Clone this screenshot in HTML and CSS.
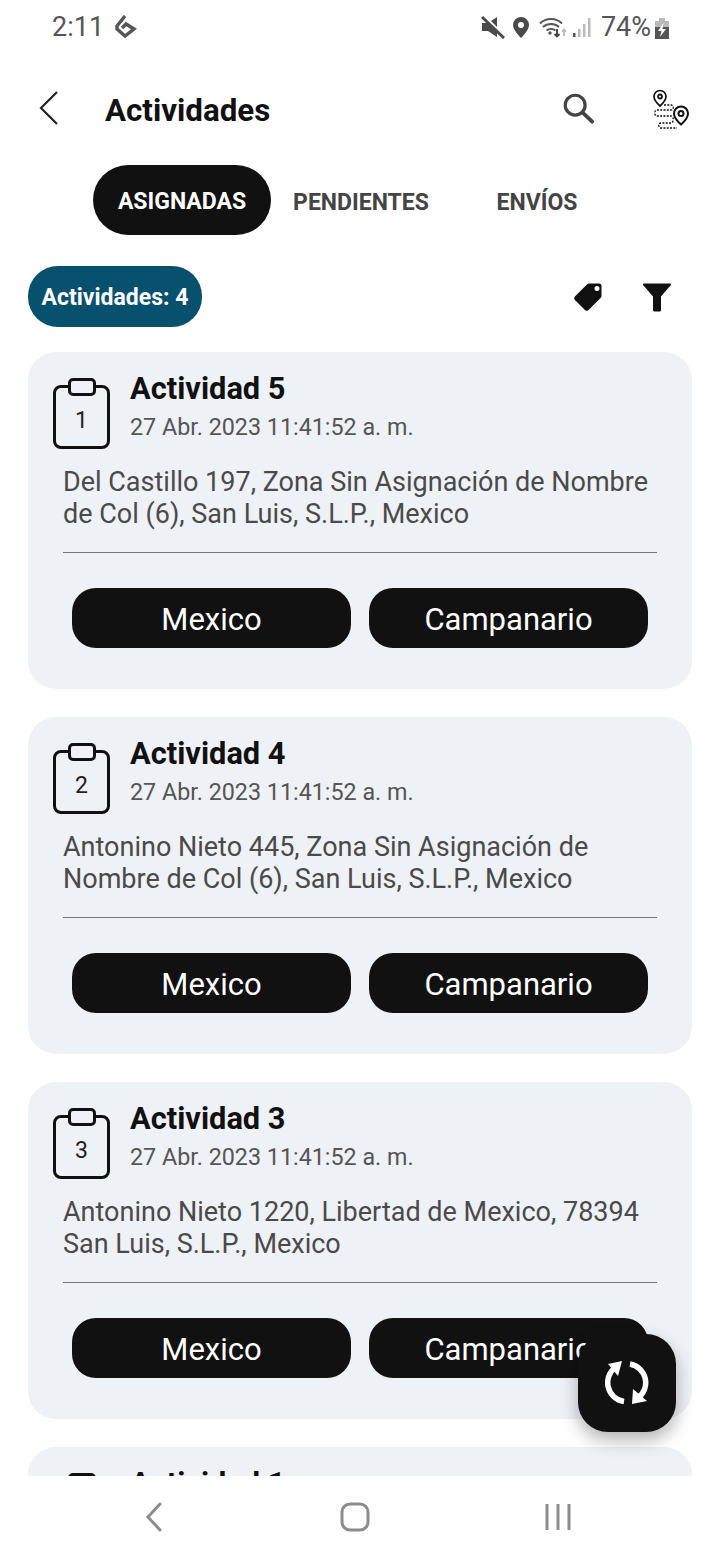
FILE: index.html
```html
<!DOCTYPE html>
<html lang="es">
<head>
    <meta charset="UTF-8">
    <title>Actividades</title>
    <link rel="stylesheet" href="styles.css">
</head>
<body>

<div class="app">
    <div class="status-bar">
        <div class="status-left">
            <span class="clock">2:11</span>
            <svg class="status-logo" width="24" height="24" viewBox="0 0 24 24" fill="none" stroke="#555" stroke-width="3.400">
                <path d="M12 1 L4 11 L4 14 L12 21 L21 14 L13 9 L9 13"/>
            </svg>
        </div>
        <div class="status-right">
            <svg width="24" height="24" viewBox="0 0 24 24"><path d="M1 8h6l9-6v20l-9-6H1z" fill="#4a4a4a"/><path d="M2 0 L24 22" stroke="#fff" stroke-width="3"/><path d="M1 2 L23 23" stroke="#4a4a4a" stroke-width="3"/></svg>
            <svg class="ico-pin" width="18" height="24" viewBox="0 0 18 24"><path fill-rule="evenodd" d="M9 2a8 8 0 0 0-8 8c0 5.500 8 13 8 13s8-7.500 8-13a8 8 0 0 0-8-8zm0 5a3 3 0 1 1 0 6 3 3 0 0 1 0-6z" fill="#4a4a4a"/></svg>
            <svg class="ico-wifi" width="28" height="24" viewBox="0 0 28 24" fill="none" stroke="#555" stroke-width="1.900">
                <path d="M1 8.500c6-6 16-6 22 0M4 12c4.500-4 11.500-4 16 0M7.500 15.500c2.500-2 6.500-2 9 0"/>
                <circle cx="11" cy="18" r="1.700" fill="#555" stroke="none"/>
                <path d="M18 14v7M15.500 19l2.500 2.500 2.500-2.500" stroke="#444"/>
                <path d="M25 21v-6M23 16.500l2-2 2 2" stroke="#bbb"/>
            </svg>
            <svg class="ico-signal" width="20" height="24" viewBox="0 0 20 24" fill="#bbb">
                <rect x="1" y="18" width="2.500" height="4" fill="#555"/><rect x="6" y="14" width="2.500" height="8"/><rect x="11" y="9" width="2.500" height="13"/><rect x="16" y="3" width="2.500" height="19"/>
            </svg>
            <span class="battery-text">74%</span>
            <svg width="16" height="24" viewBox="0 0 16 24">
                <rect x="1" y="6" width="14" height="18" fill="#555"/><rect x="1" y="6" width="14" height="6" fill="#bbb"/><rect x="5" y="3" width="6" height="3" fill="#bbb"/>
                <path d="M9.500 8 L4 16 L7.500 16 L6 22 L12 14 L8.500 14z" fill="#fff"/>
            </svg>
        </div>
    </div>

    <div class="header">
        <svg class="back" width="22" height="36" viewBox="0 0 22 36" fill="none" stroke="#222" stroke-width="2.200"><path d="M19 2 L3 18 L19 34"/></svg>
        <h1>Actividades</h1>
        <svg class="search" width="34" height="34" viewBox="0 0 36 36" fill="none" stroke="#444" stroke-width="3.400"><circle cx="15" cy="15" r="10.500"/><path d="M23 23 L33 32.500" stroke-linecap="round" stroke-width="4"/></svg>
        <svg class="route" width="38" height="42" viewBox="0 0 38 42" fill="none" stroke="#111" stroke-width="1.700">
            <path d="M9 1.500a6 6 0 0 0-6 6c0 4 6 9.500 6 9.500s6-5.500 6-9.500a6 6 0 0 0-6-6z"/>
            <circle cx="9" cy="7.500" r="2" stroke-width="1.800"/>
            <path d="M30 17.500a7 7 0 0 0-7 7c0 5 7 11 7 11s7-6 7-11a7 7 0 0 0-7-7z" stroke-width="2"/>
            <circle cx="30" cy="24.500" r="2.500" stroke-width="2"/>
            <path d="M13 16h7c3 0 3 5 0 5H6c-3 0-3 6 0 6h14c3 0 3 7 0 7H10c-3 0-3 5 0 5h16" stroke-width="1.300" stroke-dasharray="2 1.300"/>
        </svg>
    </div>

    <div class="tabs">
        <div class="tab active">ASIGNADAS</div>
        <div class="tab tab-mid">PENDIENTES</div>
        <div class="tab tab-last">ENVÍOS</div>
    </div>

    <div class="toolbar">
        <div class="count">Actividades: 4</div>
        <div class="toolbar-icons">
            <svg width="32" height="32" viewBox="0 0 32 32"><path fill-rule="evenodd" d="M17 2.500h10a2.500 2.500 0 0 1 2.500 2.500v10c0 .7-.3 1.300-.7 1.800L16.500 29a2.500 2.500 0 0 1-3.500 0L2.900 18.900a2.500 2.500 0 0 1 0-3.500L15.200 3.200c.5-.4 1.100-.7 1.800-.7zM25 5a2.500 2.500 0 1 0 0 5 2.500 2.500 0 0 0 0-5z" fill="#111"/></svg>
            <svg width="30" height="32" viewBox="0 0 30 32"><path d="M2 2.500h26c1 0 1.300 1 .7 1.700L19 15.500V29a1.500 1.500 0 0 1-1.500 1.500h-5A1.500 1.500 0 0 1 11 29V15.500L1.300 4.200C.7 3.500 1 2.500 2 2.500z" fill="#111"/></svg>
        </div>
    </div>

    <div class="list">
        <div class="card">
            <div class="card-top">
                <div class="clip"><span class="clip-cap"></span><span class="clip-num">1</span></div>
                <div>
                    <div class="card-title">Actividad 5</div>
                    <div class="card-date">27 Abr. 2023 11:41:52 a. m.</div>
                </div>
            </div>
            <div class="card-address">Del Castillo 197, Zona Sin Asignación de Nombre de Col (6), San Luis, S.L.P., Mexico</div>
            <div class="card-buttons">
                <button>Mexico</button>
                <button>Campanario</button>
            </div>
        </div>

        <div class="card">
            <div class="card-top">
                <div class="clip"><span class="clip-cap"></span><span class="clip-num">2</span></div>
                <div>
                    <div class="card-title">Actividad 4</div>
                    <div class="card-date">27 Abr. 2023 11:41:52 a. m.</div>
                </div>
            </div>
            <div class="card-address">Antonino Nieto 445, Zona Sin Asignación de Nombre de Col (6), San Luis, S.L.P., Mexico</div>
            <div class="card-buttons">
                <button>Mexico</button>
                <button>Campanario</button>
            </div>
        </div>

        <div class="card">
            <div class="card-top">
                <div class="clip"><span class="clip-cap"></span><span class="clip-num">3</span></div>
                <div>
                    <div class="card-title">Actividad 3</div>
                    <div class="card-date">27 Abr. 2023 11:41:52 a. m.</div>
                </div>
            </div>
            <div class="card-address">Antonino Nieto 1220, Libertad de Mexico, 78394 San Luis, S.L.P., Mexico</div>
            <div class="card-buttons">
                <button>Mexico</button>
                <button>Campanario</button>
            </div>
        </div>

        <div class="card">
            <div class="card-top">
                <div class="clip"><span class="clip-cap"></span></div>
                <div>
                    <div class="card-title">Actividad 1</div>
                </div>
            </div>
        </div>
    </div>

    <button class="fab">
        <svg width="44" height="44" viewBox="0 0 44 44" fill="none" stroke="#fff" stroke-width="5.500">
            <path d="M11 6 A 19 19 0 0 0 19 40.500"/>
            <path d="M25 3 A 19 19 0 0 1 33 37"/>
            <path d="M3 3 L17 0 L13 15z" fill="#fff" stroke="none"/>
            <path d="M28 28 L42 40 L27 43z" fill="#fff" stroke="none"/>
        </svg>
    </button>

    <div class="nav-bar">
        <svg width="20" height="30" viewBox="0 0 20 30" fill="none" stroke="#8c8c8c" stroke-width="3"><path d="M16 2 L4 15 L16 28" stroke-linecap="round"/></svg>
        <svg class="nav-home" width="30" height="30" viewBox="0 0 30 30" fill="none" stroke="#8c8c8c" stroke-width="3"><rect x="2" y="2" width="26" height="26" rx="8"/></svg>
        <svg width="28" height="28" viewBox="0 0 28 28" fill="none" stroke="#8c8c8c" stroke-width="3"><path d="M3 1v26M14 1v26M25 1v26"/></svg>
    </div>
</div>

</body>
</html>
```
FILE: styles.css
```css
* {
    box-sizing: border-box;
}

body {
    margin: 0;
    background: white;
    font-family: Roboto, sans-serif;
    color: #111;
}

.app {
    position: relative;
    width: 720px;
    height: 1560px;
    display: flex;
    flex-direction: column;
    overflow: hidden;
}

.status-bar {
    height: 54px;
    padding: 0 50px 0 52px;
    display: flex;
    justify-content: space-between;
    align-items: center;
}

.status-left,
.status-right {
    display: flex;
    align-items: center;
}

.clock {
    font-size: 27px;
    color: #555;
}

.status-logo {
    margin-left: 9px;
}

.ico-pin {
    margin-left: 7px;
}

.ico-wifi {
    margin-left: 9px;
}

.ico-signal {
    margin-left: 5px;
}

.battery-text {
    font-size: 27px;
    color: #555;
    margin-left: 9px;
    margin-right: 3px;
}

.header {
    height: 108px;
    padding: 0 31px 0 38px;
    display: flex;
    align-items: center;
}

.header h1 {
    margin: 4px 0 0 45px;
    font-size: 31.3px;
    font-weight: 700;
    flex: 1;
}

.search {
    margin-right: 56px;
}

.route {
    margin-top: 4px;
}

.tabs {
    height: 70px;
    margin-top: 3px;
    padding-left: 93px;
    display: flex;
    align-items: center;
}

.tab {
    padding-top: 4px;
    font-size: 23px;
    font-weight: 700;
    color: #444;
    width: 178px;
    text-align: center;
    white-space: nowrap;
}

.tab.active {
    height: 70px;
    padding-top: 2px;
    line-height: 70px;
    background: #111;
    color: white;
    border-radius: 35px;
}

.tab-mid {
    padding-left: 2px;
}

.tab-last {
    width: 150px;
    margin-left: 13px;
}

.toolbar {
    height: 61px;
    margin-top: 31px;
    padding: 0 48px 0 28px;
    display: flex;
    justify-content: space-between;
    align-items: center;
}

.count {
    height: 61px;
    line-height: 63px;
    width: 174px;
    text-align: center;
    background: #07506e;
    color: white;
    font-size: 23px;
    font-weight: 700;
    border-radius: 30px;
    white-space: nowrap;
}

.toolbar-icons {
    display: flex;
    align-items: center;
    gap: 38px;
}

.list {
    margin-top: 25px;
    padding: 0 28px;
    flex: 1;
    min-height: 0;
    overflow: hidden;
    display: flex;
    flex-direction: column;
    gap: 28px;
}

.card {
    flex: none;
    height: 337px;
    padding: 20px 35px 0 25px;
    background: #eef1f6;
    border-radius: 28px;
}

.card-top {
    display: flex;
    gap: 20px;
}

.clip {
    position: relative;
    width: 57px;
    height: 64px;
    margin-top: 13px;
    border: 3px solid #111;
    border-radius: 8px;
    display: flex;
    align-items: center;
    justify-content: center;
}

.clip-cap {
    position: absolute;
    top: -10px;
    left: 12px;
    width: 28px;
    height: 18px;
    background: #eef1f6;
    border: 3px solid #111;
    border-radius: 5px;
}

.clip-num {
    font-size: 23px;
    color: #222;
    margin-top: 6px;
}

.card-title {
    font-size: 30.8px;
    font-weight: 700;
    line-height: 33px;
}

.card-date {
    margin-top: 6px;
    font-size: 23.3px;
    line-height: 32px;
    color: #555;
    white-space: nowrap;
}

.card-address {
    height: 87px;
    margin: 17px 0 0 10px;
    font-size: 27px;
    line-height: 32px;
    color: #4a4a4a;
    border-bottom: 1px solid #777;
}

.card-buttons {
    margin: 35px 9px 0 19px;
    display: flex;
    gap: 18px;
}

.card-buttons button {
    flex: 1;
    height: 60px;
    padding: 2px 0 0;
    border: none;
    border-radius: 24px;
    background: #111;
    color: white;
    font-family: Roboto, sans-serif;
    font-size: 31px;
}

.fab {
    position: absolute;
    left: 578px;
    top: 1334px;
    width: 98px;
    height: 98px;
    padding: 0;
    border: none;
    border-radius: 30px;
    background: #111;
    box-shadow: 0 8px 18px rgba(0,0,0,0.3);
    display: flex;
    align-items: center;
    justify-content: center;
}

.nav-bar {
    height: 84px;
    padding: 0 148px 2px 144px;
    background: white;
    display: flex;
    justify-content: space-between;
    align-items: center;
}

.nav-home {
    margin-left: 2px;
}
```
